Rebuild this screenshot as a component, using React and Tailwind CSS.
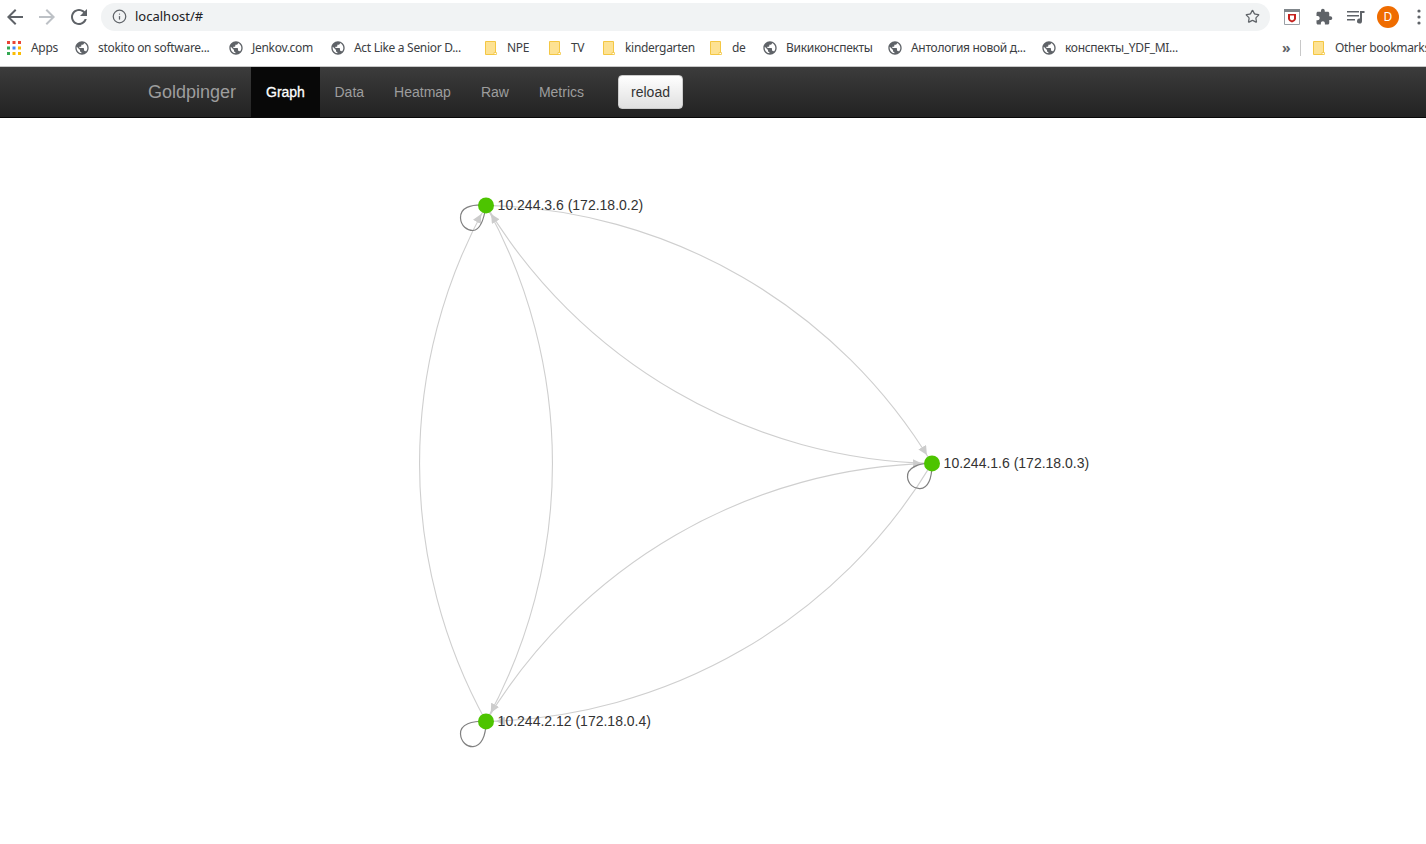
import React from 'react';
import { Info, Star } from 'lucide-react';

const GLOBE = 'M12 2C6.48 2 2 6.48 2 12s4.48 10 10 10 10-4.48 10-10S17.52 2 12 2zm-1 17.93c-3.95-.49-7-3.85-7-7.93 0-.62.08-1.21.21-1.79L9 15v1c0 1.1.9 2 2 2v1.93zm6.9-2.54c-.26-.81-1-1.39-1.9-1.39h-1v-3c0-.55-.45-1-1-1H8v-2h2c.55 0 1-.45 1-1V7h2c1.1 0 2-.9 2-2v-.41c2.93 1.19 5 4.06 5 7.41 0 2.08-.8 3.97-2.1 5.39z';

const bookmarks = [
  { type: 'globe', label: 'stokito on software...', width: 'w-[154px]' },
  { type: 'globe', label: 'Jenkov.com', width: 'w-[102px]' },
  { type: 'globe', label: 'Act Like a Senior D...', width: 'w-[153px]' },
  { type: 'folder', label: 'NPE', width: 'w-[64px]' },
  { type: 'folder', label: 'TV', width: 'w-[54px]' },
  { type: 'folder', label: 'kindergarten', width: 'w-[107px]' },
  { type: 'folder', label: 'de', width: 'w-[54px]' },
  { type: 'globe', label: 'Викиконспекты', width: 'w-[125px]' },
  { type: 'globe', label: 'Антология новой д...', width: 'w-[154px]' },
  { type: 'globe', label: 'конспекты_YDF_MI...', width: 'w-[240px]' },
];

const navItems = [
  { label: 'Graph', active: true },
  { label: 'Data' },
  { label: 'Heatmap' },
  { label: 'Raw' },
  { label: 'Metrics' },
];

const nodes = [
  { x: 486, y: 205.4, label: '10.244.3.6 (172.18.0.2)', loop: 'M486 205C470 204 460 208 460.500 218C461 226 467 230.500 473 230.500C480 230 484 220 486 205' },
  { x: 932, y: 463.4, label: '10.244.1.6 (172.18.0.3)', loop: 'M932 463C918 463 907 468 907.500 477C908 484 914 489 920 488.700C928 488 932 478 932 463' },
  { x: 486, y: 721.4, label: '10.244.2.12 (172.18.0.4)', loop: 'M486 721C472 721 460 724 460.500 734C461 742 467 747 473 746.700C481 746 486 737 486 721' },
];

// every pair is linked both ways, all arcs sweep clockwise
const edges = [
  [0, 1], [1, 2], [2, 0], [0, 2], [1, 0], [2, 1],
];

const arcPath = (a, b) => {
  const r = Math.hypot(b.x - a.x, b.y - a.y) * 1.035;
  return `M${a.x},${a.y}A${r},${r} 0 0,1 ${b.x},${b.y}`;
};

const GlobeIcon = () => (
  <svg viewBox="0 0 24 24" className="w-4 h-4 shrink-0 -mx-px" fill="#5f6368"><path d={GLOBE} /></svg>
);

const FolderIcon = () => (
  <svg viewBox="0 0 14 16" className="w-[14px] h-4 shrink-0">
    <path d="M1.500 1.500h10v13h-10z" fill="#fde293" stroke="#f4c743" />
    <path d="M10 12.500h2.500v2H10z" fill="#fff" stroke="#f4c743" strokeWidth=".8" />
  </svg>
);

const AppsIcon = () => (
  <svg viewBox="0 0 14 14" className="w-[14px] h-[14px] shrink-0">
    <path d="M0 0h3v3H0z" fill="#ea4335" /><path d="M5.500 0h3v3h-3z" fill="#ea4335" /><path d="M11 0h3v3h-3z" fill="#ea4335" />
    <path d="M0 5.500h3v3H0z" fill="#34a853" /><path d="M5.500 5.500h3v3h-3z" fill="#4285f4" /><path d="M11 5.500h3v3h-3z" fill="#fbbc04" />
    <path d="M0 11h3v3H0z" fill="#34a853" /><path d="M5.500 11h3v3h-3z" fill="#fbbc04" /><path d="M11 11h3v3h-3z" fill="#fbbc04" />
  </svg>
);

const BrowserBar = () => (
  <div className="font-['Noto_Sans',sans-serif] bg-white">
    <div className="h-[33px] flex items-center pl-[3px]">
      <svg viewBox="0 0 24 24" className="w-6 h-6 shrink-0" fill="#5f6368">
        <path d="M20 11H7.830l5.590-5.590L12 4l-8 8 8 8 1.410-1.410L7.830 13H20v-2z" />
      </svg>
      <svg viewBox="0 0 24 24" className="w-6 h-6 shrink-0 ml-2" fill="#bdc1c6">
        <path d="M4 11h12.170l-5.590-5.590L12 4l8 8-8 8-1.410-1.410L16.170 13H4v-2z" />
      </svg>
      <svg viewBox="0 0 24 24" className="w-6 h-6 shrink-0 ml-2" fill="#5f6368">
        <path d="M17.650 6.350C16.200 4.900 14.210 4 12 4c-4.420 0-7.990 3.580-7.990 8s3.570 8 7.990 8c3.730 0 6.840-2.550 7.730-6h-2.080c-.82 2.330-3.040 4-5.650 4-3.310 0-6-2.690-6-6s2.690-6 6-6c1.660 0 3.140.69 4.220 1.780L13 11h7V4l-2.350 2.350z" />
      </svg>
      <div className="ml-[10px] w-[1169px] h-7 rounded-full bg-[#f1f3f4] flex items-center pl-[11px] pr-[10px]">
        <Info size={15} strokeWidth={2} className="text-[#5f6368] shrink-0" />
        <span className="ml-[8px] text-[13px] leading-none text-[#202124]">localhost/#</span>
        <Star size={15} strokeWidth={2} className="ml-auto text-[#5f6368]" />
      </div>
      <svg viewBox="0 0 16 16" className="w-4 h-4 shrink-0 ml-[14px]">
        <path d="M.5.5h15v15H.5z" fill="#fff" stroke="#9aa0a6" />
        <path d="M0 0h16v3H0z" fill="#80868b" />
        <path d="M4 5h8v4.500c0 2-2 3-4 4-2-1-4-2-4-4z" fill="#c5221f" />
        <path d="M6 6.500h4v3c0 1-1 1.500-2 2-1-.5-2-1-2-2z" fill="#fff" />
      </svg>
      <svg viewBox="0 0 24 24" className="w-[18px] h-[18px] shrink-0 ml-[15px]" fill="#5f6368">
        <path d="M20.500 11H19V7c0-1.100-.9-2-2-2h-4V3.500C13 2.120 11.880 1 10.500 1S8 2.120 8 3.500V5H4c-1.100 0-1.990.9-1.990 2v3.800H3.500c1.490 0 2.700 1.210 2.700 2.700s-1.210 2.700-2.700 2.700H2V20c0 1.100.9 2 2 2h3.800v-1.500c0-1.490 1.210-2.700 2.700-2.700 1.490 0 2.700 1.210 2.700 2.700V22H17c1.100 0 2-.9 2-2v-4h1.500c1.380 0 2.500-1.120 2.500-2.500S21.880 11 20.500 11z" />
      </svg>
      <svg viewBox="0 0 18 14" className="w-[18px] h-[14px] shrink-0 ml-[14px]" fill="#5f6368">
        <path d="M0 1h12v1.500H0zM0 5h12v1.500H0zM0 9h8v1.500H0zM13 1h4.500v2H15v8a2.500 2.500 0 1 1-2-2.400z" />
      </svg>
      <div className="w-[22px] h-[22px] ml-[12px] rounded-full bg-[#ef6c00] text-white text-[12px] flex items-center justify-center shrink-0">D</div>
      <svg viewBox="0 0 4 16" className="w-1 h-4 shrink-0 ml-[18px]" fill="#5f6368">
        <circle cx="2" cy="2" r="1.600" /><circle cx="2" cy="8" r="1.600" /><circle cx="2" cy="14" r="1.600" />
      </svg>
    </div>
    <div className="h-[34px] pb-[3px] flex items-center pl-[7px] border-b border-[#c8c8c8] overflow-hidden whitespace-nowrap text-[12px] tracking-[-0.3px] text-[#3c4043]">
      <div className="w-[68px] shrink-0 flex items-center gap-[10px]">
        <AppsIcon />
        <span>Apps</span>
      </div>
      {bookmarks.map((b) => (
        <div key={b.label} className={`${b.width} shrink-0 flex items-center gap-[9px]`}>
          {b.type === 'globe' ? <GlobeIcon /> : <FolderIcon />}
          <span>{b.label}</span>
        </div>
      ))}
      <span className="w-[18px] shrink-0 text-[14px] leading-none font-bold text-[#5f6368]">»</span>
      <div className="w-px h-4 bg-[#c8c8c8] shrink-0" />
      <div className="ml-[11px] shrink-0 flex items-center gap-[9px]">
        <FolderIcon />
        <span>Other bookmarks</span>
      </div>
    </div>
  </div>
);

const Navbar = () => (
  <div className="h-[51px] flex pl-[133px] bg-gradient-to-b from-[#3c3c3c] to-[#222222] border-b border-[#080808] font-['Liberation_Sans',sans-serif] text-[14px] text-[#9d9d9d]">
    <div className="w-[118px] pl-[15px] flex items-center text-[18px]">Goldpinger</div>
    {navItems.map((item) => (
      <div
        key={item.label}
        className={`flex items-center ${item.active ? 'w-[68.5px] pl-[15px] bg-[#080808] text-white [-webkit-text-stroke:0.3px_white]' : 'px-[15px]'}`}
      >
        {item.label}
      </div>
    ))}
    <button className="ml-[19px] mt-2 w-[65px] h-[34px] rounded-[4px] border border-[#cccccc] bg-gradient-to-b from-white to-[#e0e0e0] text-[#333333]">
      reload
    </button>
  </div>
);

const Graph = () => (
  <svg viewBox="0 118 1426 726" className="block w-full h-[726px] font-['Liberation_Sans',sans-serif]">
    <defs>
      <marker id="arrow" viewBox="0 -5 10 10" refX="21" refY="0" markerWidth="9" markerHeight="9" markerUnits="userSpaceOnUse" orient="auto">
        <path d="M0,-5L10,0L0,5" fill="#cccccc" />
      </marker>
    </defs>
    {edges.map(([from, to]) => (
      <path key={`${from}-${to}`} d={arcPath(nodes[from], nodes[to])} fill="none" stroke="#cfcfcf" strokeWidth="1.1" markerEnd="url(#arrow)" />
    ))}
    {nodes.map((n) => (
      <g key={n.label}>
        <path d={n.loop} fill="none" stroke="#808080" strokeWidth="1.2" />
        <circle cx={n.x} cy={n.y} r="8" fill="#4dc400" />
        <text x={n.x + 11.6} y={n.y + 4.6} fontSize="14" fill="#333333">{n.label}</text>
      </g>
    ))}
  </svg>
);

const App = () => (
  <div className="h-[844px] overflow-hidden bg-white">
    <BrowserBar />
    <Navbar />
    <Graph />
  </div>
);

export default App;
